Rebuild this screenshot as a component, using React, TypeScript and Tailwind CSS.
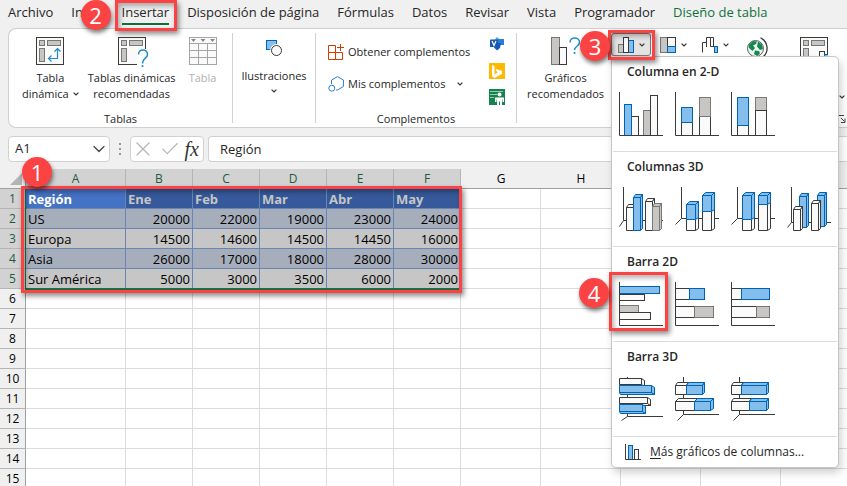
import type { ReactNode } from "react";
import clsx from "clsx";
import { ChevronDown, Check, X } from "lucide-react";

const BLUE = "#83beec";
const BLUE_LINE = "#0063b1";
const GRAY = "#c8c6c4";
const GRAY_LINE = "#797774";
const WHITE = "#fafafa";
const DARK = "#3a3a38";

const tabs = [
  "Archivo",
  "Inicio",
  "Insertar",
  "Disposición de página",
  "Fórmulas",
  "Datos",
  "Revisar",
  "Vista",
  "Programador",
  "Diseño de tabla",
];

// The last four columns sit behind the open menu and carry no letter
const columns = ["A", "B", "C", "D", "E", "F", "G", "H", "", "", "", ""];

const data: (string | number)[][] = [
  ["Región", "Ene", "Feb", "Mar", "Abr", "May"],
  ["US", 20000, 22000, 19000, 23000, 24000],
  ["Europa", 14500, 14600, 14500, 14450, 16000],
  ["Asia", 26000, 17000, 18000, 28000, 30000],
  ["Sur América", 5000, 3000, 3500, 6000, 2000],
];

type Tone = "blue" | "gray" | "white";

const tones: Record<Tone, { fill: string; stroke: string }> = {
  blue: { fill: BLUE, stroke: BLUE_LINE },
  gray: { fill: GRAY, stroke: GRAY_LINE },
  white: { fill: WHITE, stroke: DARK },
};

function Bar({ x, y, r, b, tone = "white" }: { x: number; y: number; r: number; b: number; tone?: Tone }) {
  return <rect x={x} y={y} width={r - x} height={b - y} {...tones[tone]} />;
}

// Front face plus an extruded side and top (or bottom, when dy is positive)
function Box({ x, y, r, b, tone = "white", dx = 3, dy = -3 }: { x: number; y: number; r: number; b: number; tone?: Tone; dx?: number; dy?: number }) {
  const up = dy < 0;
  return (
    <g {...tones[tone]} strokeLinejoin="round">
      {up ? (
        <path d={`M${x} ${y}L${x + dx} ${y + dy}H${r + dx}L${r} ${y}Z`} />
      ) : (
        <path d={`M${x} ${b}L${x + 1} ${b + dy}H${r + dx}L${r} ${b}Z`} />
      )}
      <path d={`M${r} ${y}L${r + dx} ${y + dy}V${up ? b - 2 : b + dy}L${r} ${b}Z`} />
      <rect x={x} y={y} width={r - x} height={b - y} />
    </g>
  );
}

function ChartSvg({ children }: { children: ReactNode }) {
  return (
    <svg viewBox="0 0 44 44" className="size-11" fill="none" stroke={DARK} aria-hidden="true">
      {children}
    </svg>
  );
}

const axes = <path d="M.5 0V43.5H44" />;

const sections: { title: string; charts: { name: string; icon: ReactNode }[] }[] = [
  {
    title: "Columna en 2-D",
    charts: [
      {
        name: "Columna agrupada",
        icon: (
          <>
            <Bar x={12.5} y={24.5} r={19.5} b={43.5} />
            <Bar x={5.5} y={12.5} r={12.5} b={43.5} tone="blue" />
            <Bar x={24.5} y={18.5} r={31.5} b={43.5} tone="gray" />
            <Bar x={31.5} y={3.5} r={38.5} b={43.5} />
            {axes}
          </>
        ),
      },
      {
        name: "Columna apilada",
        icon: (
          <>
            <Bar x={6.5} y={30.5} r={17.5} b={43.5} />
            <Bar x={6.5} y={15.5} r={17.5} b={30.5} tone="blue" />
            <Bar x={24.5} y={24.5} r={35.5} b={43.5} />
            <Bar x={24.5} y={5.5} r={35.5} b={24.5} tone="gray" />
            {axes}
          </>
        ),
      },
      {
        name: "Columna 100% apilada",
        icon: (
          <>
            <Bar x={6.5} y={33.5} r={17.5} b={43.5} />
            <Bar x={6.5} y={5.5} r={17.5} b={33.5} tone="blue" />
            <Bar x={24.5} y={5.5} r={35.5} b={18.5} tone="gray" />
            <Bar x={24.5} y={18.5} r={35.5} b={43.5} />
            {axes}
          </>
        ),
      },
    ],
  },
  {
    title: "Columnas 3D",
    charts: [
      {
        name: "Columna 3D agrupada",
        icon: (
          <>
            <path d="M4.5 0V33.5H44M4.5 33.5L.5 39.5" />
            <Box x={7.5} y={20.5} r={14.5} b={43.5} dx={2} />
            <Box x={14.5} y={10.5} r={21.5} b={43.5} tone="blue" dx={2} />
            <Box x={26.5} y={14.5} r={33.5} b={43.5} dx={2} />
            <Box x={33.5} y={19.5} r={40.5} b={43.5} tone="gray" dx={2} />
          </>
        ),
      },
      {
        name: "Columna 3D apilada",
        icon: (
          <>
            <path d="M6.5 0V31.5H44M6.5 31.5L.5 37.5" />
            <Box x={11.5} y={32.5} r={20.5} b={43.5} />
            <Box x={11.5} y={17.5} r={20.5} b={32.5} tone="blue" />
            <Box x={27.5} y={24.5} r={36.5} b={43.5} />
            <Box x={27.5} y={8.5} r={36.5} b={24.5} tone="blue" />
          </>
        ),
      },
      {
        name: "Columna 3D 100% apilada",
        icon: (
          <>
            <path d="M6.5 0V31.5H44M6.5 31.5L.5 37.5" />
            <Box x={11.5} y={32.5} r={20.5} b={43.5} />
            <Box x={11.5} y={8.5} r={20.5} b={32.5} tone="blue" />
            <Box x={27.5} y={17.5} r={36.5} b={43.5} />
            <Box x={27.5} y={8.5} r={36.5} b={17.5} tone="blue" />
          </>
        ),
      },
      {
        name: "Columna 3D",
        icon: (
          <>
            <path d="M4.5 0V35.5H44M4.5 35.5L.5 40.5" />
            <Box x={12.5} y={9.5} r={19.5} b={40.5} tone="blue" dx={2} />
            <Box x={6.5} y={22.5} r={13.5} b={43.5} dx={2} />
            <Box x={30.5} y={8.5} r={37.5} b={39.5} tone="blue" dx={2} />
            <Box x={24.5} y={16.5} r={31.5} b={43.5} dx={2} />
          </>
        ),
      },
    ],
  },
  {
    title: "Barra 2D",
    charts: [
      {
        name: "Barra agrupada",
        icon: (
          <>
            <Bar x={0.5} y={12.5} r={25.5} b={18.5} />
            <Bar x={0.5} y={4.5} r={40.5} b={11.5} tone="blue" />
            <Bar x={0.5} y={23.5} r={19.5} b={30.5} tone="gray" />
            <Bar x={0.5} y={30.5} r={31.5} b={37.5} />
            {axes}
          </>
        ),
      },
      {
        name: "Barra apilada",
        icon: (
          <>
            <Bar x={0.5} y={6.5} r={14.5} b={17.5} />
            <Bar x={14.5} y={6.5} r={29.5} b={17.5} tone="blue" />
            <Bar x={0.5} y={24.5} r={19.5} b={35.5} />
            <Bar x={19.5} y={24.5} r={38.5} b={35.5} tone="gray" />
            {axes}
          </>
        ),
      },
      {
        name: "Barra 100% apilada",
        icon: (
          <>
            <Bar x={0.5} y={6.5} r={10.5} b={17.5} />
            <Bar x={10.5} y={6.5} r={38.5} b={17.5} tone="blue" />
            <Bar x={0.5} y={24.5} r={25.5} b={35.5} />
            <Bar x={25.5} y={24.5} r={38.5} b={35.5} tone="gray" />
            {axes}
          </>
        ),
      },
    ],
  },
  {
    title: "Barra 3D",
    charts: [
      {
        name: "Barra 3D agrupada",
        icon: (
          <>
            <path d="M8.5 0V39.5H44M8.5 39.5L2.5 43.5" />
            <Box x={0.5} y={1.5} r={22.5} b={7.5} dy={2} />
            <Box x={0.5} y={8.5} r={32.5} b={15.5} tone="blue" dy={2} />
            <Box x={0.5} y={20.5} r={28.5} b={26.5} dy={2} />
            <Box x={0.5} y={27.5} r={23.5} b={34.5} tone="blue" dy={2} />
          </>
        ),
      },
      {
        name: "Barra 3D apilada",
        icon: (
          <>
            <path d="M8.5 0V37.5H44M8.5 37.5L2.5 43.5" />
            <Box x={0.5} y={8.5} r={11.5} b={17.5} dx={2} />
            <Box x={11.5} y={8.5} r={27.5} b={17.5} tone="blue" dx={2} />
            <Box x={0.5} y={24.5} r={19.5} b={33.5} />
            <Box x={19.5} y={24.5} r={35.5} b={33.5} tone="blue" />
          </>
        ),
      },
      {
        name: "Barra 3D 100% apilada",
        icon: (
          <>
            <path d="M8.5 0V37.5H44M8.5 37.5L2.5 43.5" />
            <Box x={0.5} y={8.5} r={10.5} b={17.5} dx={2} />
            <Box x={10.5} y={8.5} r={35.5} b={17.5} tone="blue" dx={2} />
            <Box x={0.5} y={24.5} r={18.5} b={33.5} dx={2} />
            <Box x={18.5} y={24.5} r={35.5} b={33.5} tone="blue" dx={2} />
          </>
        ),
      },
    ],
  },
];

function Caret({ className }: { className?: string }) {
  return (
    <svg viewBox="0 0 6 4" className={clsx("w-[6px] h-1 shrink-0", className)} fill="none" stroke="#333" strokeWidth="1.2" aria-hidden="true">
      <path d="M.6 .6L3 3L5.4 .6" />
    </svg>
  );
}

function Step({ n, className }: { n: number; className: string }) {
  return (
    <span
      className={clsx(
        "absolute z-40 flex size-[30px] items-center justify-center rounded-full bg-[#fc4343] font-['Open_Sans',sans-serif] text-[22px] font-medium leading-none text-white shadow-[1px_3px_4px_rgba(0,0,0,0.5)]",
        className
      )}
    >
      {n}
    </span>
  );
}

function Frame({ className }: { className: string }) {
  return (
    <span
      className={clsx(
        "pointer-events-none absolute z-30 border-3 border-[#fc4343] shadow-[2px_3px_5px_rgba(0,0,0,0.45),inset_2px_3px_5px_rgba(0,0,0,0.3)]",
        className
      )}
    />
  );
}

function PivotFrame() {
  return (
    <>
      <rect x=".5" y=".5" width="27" height="27" fill={WHITE} stroke={DARK} />
      <g fill={GRAY} stroke={GRAY_LINE}>
        <rect x="3.5" y="3.5" width="5" height="5" />
        <rect x="11.5" y="3.5" width="13" height="5" />
        <rect x="3.5" y="11.5" width="5" height="13" />
      </g>
    </>
  );
}

function PivotIcon() {
  return (
    <svg viewBox="0 0 28 28" className="size-7" fill="none" aria-hidden="true">
      <PivotFrame />
      <path d="M12.5 21.5H21.5V11.5M15.5 18.5L12.5 21.5L15.5 24.5M18.5 14.5L21.5 11.5L24.5 14.5" stroke="#1e8bcd" strokeWidth="1.2" />
    </svg>
  );
}

function PivotHelpIcon() {
  return (
    <svg viewBox="0 0 28 28" className="size-7 overflow-visible" fill="none" aria-hidden="true">
      <PivotFrame />
      <path d="M19 12H32V31H19Z" fill="#fff" />
      <path d="M20.5 17.5C20.5 11.5 29.5 11.5 29.5 17.5C29.5 21.5 24.5 21 24.5 26.5" stroke="#1e8bcd" strokeWidth="1.5" />
      <circle cx="24.5" cy="29" r="1.1" fill="#1e8bcd" />
    </svg>
  );
}

function TableIcon() {
  return (
    <svg viewBox="0 0 28 28" className="size-7" fill="none" stroke="#a5a5a5" aria-hidden="true">
      <rect x=".5" y=".5" width="27" height="27" fill={WHITE} />
      <path d="M.5 6.5H27.5M.5 13.5H27.5M.5 20.5H27.5M9.5 6.5V27.5M18.5 6.5V27.5" />
      <path d="M2 2H7L4.5 5ZM11.5 2H16.5L14 5ZM21 2H26L23.5 5Z" fill="#888" stroke="none" />
    </svg>
  );
}

function ShapesIcon() {
  return (
    <svg viewBox="0 0 16 16" className="size-4" aria-hidden="true">
      <rect x=".5" y=".5" width="10" height="9" fill={BLUE} stroke={BLUE_LINE} />
      <circle cx="10.5" cy="10.5" r="6.5" fill="#fff" />
      <circle cx="10.5" cy="10.5" r="5" fill={WHITE} stroke={DARK} />
    </svg>
  );
}

function StoreIcon() {
  return (
    <svg viewBox="0 0 16 16" className="size-4" fill="none" stroke="#d83b01" aria-hidden="true">
      <path d="M.5 8.5V1.5H7.5V15.5M.5 8.5H14.5V15.5H.5V8.5M12.5 0V7M9 3.5H16" />
    </svg>
  );
}

function AddinsIcon() {
  return (
    <svg viewBox="0 0 16 16" className="size-4" fill="none" stroke="#2b7cd3" aria-hidden="true">
      <path d="M3.5 8V4L9.5 .6L15.4 4V10.5L9.5 14H8" />
      <circle cx="3.8" cy="12.2" r="3" />
    </svg>
  );
}

function VisioIcon() {
  return (
    <svg viewBox="0 0 16 16" className="size-4" aria-hidden="true">
      <path d="M8 0L12 3.5L8 7L5 3.5Z" fill="#41a5ee" />
      <path d="M9 2H15V8H9Z" fill="#2b7cd3" />
      <path d="M8 6H12L11 11L8 13.5L4.5 10Z" fill="#185abd" />
      <rect x="1" y="2.5" width="8" height="7.5" rx=".6" fill="#1758b0" />
      <path d="M3 4L5 8.5L7 4" fill="none" stroke="#fff" strokeWidth="1.2" />
    </svg>
  );
}

function BingIcon() {
  return (
    <svg viewBox="0 0 16 16" className="size-4" aria-hidden="true">
      <rect width="16" height="16" fill="#ffb900" />
      <path d="M3 2L5.5 3V11.3L9 9.3L7.5 8.3L6.5 5.7L13 8V11L5.5 15L3 13Z" fill="#fff" />
    </svg>
  );
}

function PeopleGraphIcon() {
  return (
    <svg viewBox="0 0 16 16" className="size-4" aria-hidden="true">
      <rect width="16" height="16" fill="#16824e" />
      <path d="M1 2.5H14M1 5.5H8M1 8.5H5" stroke="#8fd0b0" />
      <circle cx="10.5" cy="5.5" r="2" fill="#fff" />
      <path d="M6 8.5H15V13H13.5V10.5H13V16H11V12.5H10V16H8V10.5H7.5V13H6Z" fill="#fff" />
    </svg>
  );
}

function RecommendedIcon() {
  return (
    <svg viewBox="0 0 30 28" className="w-[30px] h-7" fill="none" aria-hidden="true">
      <Bar x={0.5} y={0.5} r={8.5} b={27.5} tone="gray" />
      <Bar x={8.5} y={10.5} r={15.5} b={27.5} />
      <path d="M19 5.5C19 -.5 28.5 -.5 28.5 5.5C28.5 9.5 23.5 9 23.5 13" stroke="#1e8bcd" strokeWidth="1.5" />
      <circle cx="23.5" cy="16" r="1.1" fill="#1e8bcd" />
    </svg>
  );
}

function GlobeIcon() {
  return (
    <svg viewBox="0 0 24 28" className="w-6 h-7" fill="none" aria-hidden="true">
      <circle cx="10.5" cy="11.5" r="8" fill="#eef6f2" stroke="#5b5b5b" />
      <path d="M3.5 8L8 4L12 4.5L11 7L8 8.5L10 11L7.5 14L4 11ZM13 4.5L17 7.5L18 12L15 13L12 9.5ZM10 13.5L14 14L15 16.5L12 19L9 17Z" fill="#128a50" />
      <path d="M15.5 .7C23.5 5 24 15 18 20C13 24 6 23.5 2 19.5" stroke="#3b3b3b" strokeWidth="1.3" />
      <path d="M7 26.5H16" stroke="#3b3b3b" />
    </svg>
  );
}

function PivotChartIcon() {
  return (
    <svg viewBox="0 0 28 28" className="size-7" fill="none" aria-hidden="true">
      <PivotFrame />
      <Bar x={19.5} y={14.5} r={24.5} b={30} />
      <Bar x={24.5} y={17.5} r={30} b={30} tone="blue" />
    </svg>
  );
}

function BigButton({ icon, lines, caret, disabled }: { icon: ReactNode; lines: string[]; caret?: boolean; disabled?: boolean }) {
  return (
    <button disabled={disabled} className="flex flex-col items-center gap-[5px] leading-4 disabled:text-[#b1b1b1]">
      {icon}
      <span className="flex flex-col items-center whitespace-nowrap">
        {lines.map((line, i) => (
          <span key={line} className="flex items-center gap-1">
            {line}
            {caret && i === lines.length - 1 && <Caret />}
          </span>
        ))}
      </span>
    </button>
  );
}

function Group({ label, className, children }: { label?: string; className?: string; children: ReactNode }) {
  return (
    <div className={clsx("relative flex shrink-0 flex-col justify-between pt-2", className)}>
      {children}
      {label && <span className="text-center leading-4">{label}</span>}
    </div>
  );
}

function Divider() {
  return <span className="my-1 w-px shrink-0 bg-[#d1d1d1]" />;
}

function ChartMenu() {
  return (
    <div role="menu" className="absolute left-[94px] top-[27px] z-20 w-[228px] rounded-[5px] border border-[#c6c6c6] bg-white text-[12px] shadow-[2px_5px_8px_rgba(0,0,0,0.18)]">
      {sections.map((section) => (
        <div key={section.title} className="mx-px border-b border-[#dcdcdc] pt-[5px] pb-[15px]">
          <h3 className="mb-[10px] pl-[14px] font-semibold leading-5">{section.title}</h3>
          <div className="flex gap-3 pl-[6px]">
            {section.charts.map((chart) => (
              <button key={chart.name} role="menuitem" aria-label={chart.name} className="relative">
                <ChartSvg>{chart.icon}</ChartSvg>
                {chart.name === "Barra agrupada" && (
                  <>
                    <Frame className="-left-[10px] -top-[10px] h-[59px] w-[59px]" />
                    <Step n={4} className="-left-10 -top-1" />
                  </>
                )}
              </button>
            ))}
          </div>
        </div>
      ))}
      <button role="menuitem" className="flex h-[30px] items-center gap-[9px] pl-[13px]">
        <svg viewBox="0 0 16 16" className="size-4" fill="none" stroke={DARK} aria-hidden="true">
          <Bar x={3.5} y={1.5} r={7.5} b={15.5} tone="blue" />
          <Bar x={9.5} y={5.5} r={13.5} b={15.5} />
          <path d="M.5 0V15.5H16" />
        </svg>
        <span>
          <u className="underline-offset-2">M</u>ás gráficos de columnas...
        </span>
      </button>
    </div>
  );
}

function ChartTools() {
  return (
    <div className="absolute left-[94px] top-1 flex gap-[2px]">
      <button aria-label="Insertar gráfico de columnas o de barras" className="relative flex h-[23px] w-10 items-center justify-center gap-[5px] rounded-[3px] border border-[#7a7a7a] bg-[#e3e3e3]">
        <svg viewBox="0 0 16 16" className="size-4" aria-hidden="true">
          <Bar x={0.5} y={7.5} r={5.5} b={15.5} tone="gray" />
          <Bar x={10.5} y={3.5} r={15.5} b={15.5} tone="blue" />
          <Bar x={5.5} y={0.5} r={10.5} b={15.5} />
        </svg>
        <Caret />
        <Frame className="-left-1 -top-1 h-[30px] w-[47px]" />
        <Step n={3} className="-left-8 -top-[3px]" />
      </button>
      <button aria-label="Insertar gráfico de jerarquía" className="flex h-[23px] w-10 items-center justify-center gap-[5px]">
        <svg viewBox="0 0 16 16" className="size-4" aria-hidden="true">
          <Bar x={0.5} y={0.5} r={7.5} b={15.5} tone="gray" />
          <Bar x={7.5} y={0.5} r={15.5} b={9.5} />
          <Bar x={7.5} y={9.5} r={15.5} b={15.5} tone="blue" />
        </svg>
        <Caret />
      </button>
      <button aria-label="Insertar gráfico de cascada" className="flex h-[23px] w-10 items-center justify-center gap-[5px]">
        <svg viewBox="0 0 16 16" className="size-4" fill="none" stroke={DARK} aria-hidden="true">
          <path d="M.5 15.5V5.5H4.5M4.5 10V.5H8.5V9.5H12.5M8.500 .5H11.500V9.500" />
          <Bar x={12.5} y={9.5} r={15.5} b={15.5} tone="blue" />
        </svg>
        <Caret />
      </button>
    </div>
  );
}

function Ribbon() {
  return (
    <section aria-label="Insertar" className="relative ml-2 flex h-[100px] shrink-0 rounded-l-lg border border-r-0 border-[#cfcfcf] bg-white text-[11px]">
      <Group label="Tablas" className="w-[223px]">
        <div className="flex items-start gap-[9px] pl-[13px]">
          <BigButton icon={<PivotIcon />} lines={["Tabla", "dinámica"]} caret />
          <BigButton icon={<PivotHelpIcon />} lines={["Tablas dinámicas", "recomendadas"]} />
          <div className="pl-1">
            <BigButton icon={<TableIcon />} lines={["Tabla"]} disabled />
          </div>
        </div>
      </Group>
      <Divider />
      <Group className="w-[82px]">
        <button className="flex flex-col items-center pt-[3px]">
          <ShapesIcon />
          <span className="mt-3 leading-4">Ilustraciones</span>
          <Caret className="mt-[5px]" />
        </button>
      </Group>
      <Divider />
      <Group label="Complementos" className="w-[200px]">
        <div className="flex justify-between pl-3 pr-[11px]">
          <div className="flex flex-col gap-4 pt-[7px]">
            <button className="flex items-center gap-1 leading-4">
              <StoreIcon />
              Obtener complementos
            </button>
            <button className="flex items-center gap-1 leading-4">
              <AddinsIcon />
              Mis complementos
              <Caret className="ml-2" />
            </button>
          </div>
          <div className="flex flex-col gap-[10px]">
            <button aria-label="Visio Data Visualizer"><VisioIcon /></button>
            <button aria-label="Mapas de Bing"><BingIcon /></button>
            <button aria-label="Gráfico de personas"><PeopleGraphIcon /></button>
          </div>
        </div>
      </Group>
      <Divider />
      <Group className="min-w-0 flex-1">
        <div className="flex items-start pl-[10px]">
          <BigButton icon={<RecommendedIcon />} lines={["Gráficos", "recomendados"]} />
        </div>
        <ChartTools />
        <div className="absolute left-[228px] top-2 flex items-start gap-[31px]">
          <button aria-label="Mapas"><GlobeIcon /></button>
          <button aria-label="Gráfico dinámico"><PivotChartIcon /></button>
        </div>
        <div className="absolute inset-y-0 left-[321px] flex w-2 flex-col items-center justify-end gap-4 pb-1">
          <Caret />
          <svg viewBox="0 0 8 8" className="size-2" fill="none" stroke="#444" aria-hidden="true">
            <path d="M.5 6V.5H6M3 3L6.5 6.5M7 3.5V7.5H3" />
          </svg>
        </div>
        <ChartMenu />
      </Group>
    </section>
  );
}

function FormulaBar() {
  return (
    <div className="flex shrink-0 items-center pl-2 pt-2 pb-[7px] text-[13px]">
      <label className="flex h-[26px] w-[102px] items-center rounded-[4px] border border-[#d1d1d1] bg-white pl-[6px]">
        <input aria-label="Cuadro de nombres" defaultValue="A1" className="min-w-0 flex-1 outline-none" />
        <ChevronDown className="size-5 text-[#444]" strokeWidth={1.5} />
      </label>
      <span className="flex w-5 flex-col items-center gap-[3px]">
        <i className="size-[2px] bg-[#999]" />
        <i className="size-[2px] bg-[#999]" />
        <i className="size-[2px] bg-[#999]" />
      </span>
      <div className="flex h-[26px] w-[74px] items-center justify-between rounded-[4px] border border-[#d1d1d1] bg-white pr-1">
        <button aria-label="Cancelar" disabled><X className="size-6 text-[#b5b5b5]" strokeWidth={1.2} /></button>
        <button aria-label="Introducir" disabled><Check className="size-5.5 text-[#b5b5b5]" strokeWidth={1.2} /></button>
        <button aria-label="Insertar función" className="font-['Liberation_Serif',serif] text-[20px] italic leading-none text-[#333]">fx</button>
      </div>
      <input aria-label="Barra de fórmulas" defaultValue="Región" className="ml-1 h-[26px] min-w-0 flex-1 rounded-l-[4px] border border-r-0 border-[#d1d1d1] bg-white pl-[11px] outline-none" />
    </div>
  );
}

function Sheet() {
  return (
    <div className="relative min-h-0 flex-1">
      <table className="w-full table-fixed border-separate border-spacing-0 bg-white text-[13px] leading-[18px] text-black">
        <colgroup>
          <col className="w-[26px]" />
          <col className="w-[100px]" />
          {[1, 2, 3, 4, 5].map((n) => <col key={n} className="w-[67px]" />)}
          {[1, 2, 3, 4, 5].map((n) => <col key={n} className="w-20" />)}
          <col />
        </colgroup>
        <thead>
          <tr className="h-5">
            <th className="border-b border-r border-[#a0a0a0] bg-[#f0f0f0] p-0">
              <svg viewBox="0 0 25 19" className="h-[19px] w-full" aria-hidden="true">
                <path d="M22 4V16H10Z" fill="#b4b4b4" />
              </svg>
            </th>
            {columns.map((col, i) => (
              <th
                key={i}
                scope="col"
                className={clsx(
                  "border-b border-[#a0a0a0] p-0 text-[12px] font-normal",
                  i < 6 ? "border-r border-r-[#b5b5b5] bg-[#d2d2d2] text-[#1f5c3f]" : "bg-[#f0f0f0]"
                )}
              >
                {col}
              </th>
            ))}
          </tr>
        </thead>
        <tbody>
          {Array.from({ length: 15 }, (_, r) => (
            <tr key={r} className="h-5">
              <th
                scope="row"
                className={clsx(
                  "border-b border-r border-b-[#b5b5b5] border-r-[#a0a0a0] p-0 text-[12px] font-normal",
                  r < 5 ? "bg-[#d2d2d2] text-[#1f5c3f]" : "bg-[#f0f0f0]"
                )}
              >
                {r + 1}
              </th>
              {columns.map((_col, c) => {
                const value = data[r]?.[c];
                return (
                  <td
                    key={c}
                    className={clsx(
                      "border-b border-r p-0",
                      value === undefined && "border-[#dcdcdc]",
                      value !== undefined && "border-[#6a84b3] pl-[2px] pr-[2px]",
                      value !== undefined && r === 0 && (c === 0 ? "bg-[#4472c4] font-bold text-white" : "bg-[#35599a] font-bold text-[#c6c6c6]"),
                      value !== undefined && r > 0 && (r % 2 ? "bg-[#a6aebc]" : "bg-[#c6c6c6]"),
                      typeof value === "number" && "text-right"
                    )}
                  >
                    {value}
                  </td>
                );
              })}
            </tr>
          ))}
        </tbody>
      </table>
      <span className="absolute left-[25px] top-5 h-[101px] w-[436px] border-b-2 border-l border-[#1e6e42]" />
      <Frame className="left-[21px] top-[17px] h-[107px] w-[441px]" />
      <Step n={1} className="-top-3 left-[22px]" />
    </div>
  );
}

export default function App() {
  return (
    <div className="flex h-screen flex-col overflow-hidden bg-[#f0f0f0] font-['Open_Sans','Noto_Sans',sans-serif] text-[#262626]">
      <nav className="flex h-7 shrink-0 items-center gap-[18px] whitespace-nowrap pl-2 text-[13px]">
        {tabs.map((tab) => (
          <button
            key={tab}
            className={clsx(
              "relative h-[22px] border-b-2",
              tab === "Insertar" ? "border-[#0f703b] font-medium" : "border-transparent",
              tab === "Diseño de tabla" && "text-[#0f703b]"
            )}
          >
            {tab}
            {tab === "Insertar" && (
              <>
                <Frame className="-left-[7px] -top-[3px] h-[31px] w-[62px]" />
                <Step n={2} className="-left-[41px] -top-[3px]" />
              </>
            )}
          </button>
        ))}
      </nav>
      <Ribbon />
      <FormulaBar />
      <Sheet />
    </div>
  );
}
